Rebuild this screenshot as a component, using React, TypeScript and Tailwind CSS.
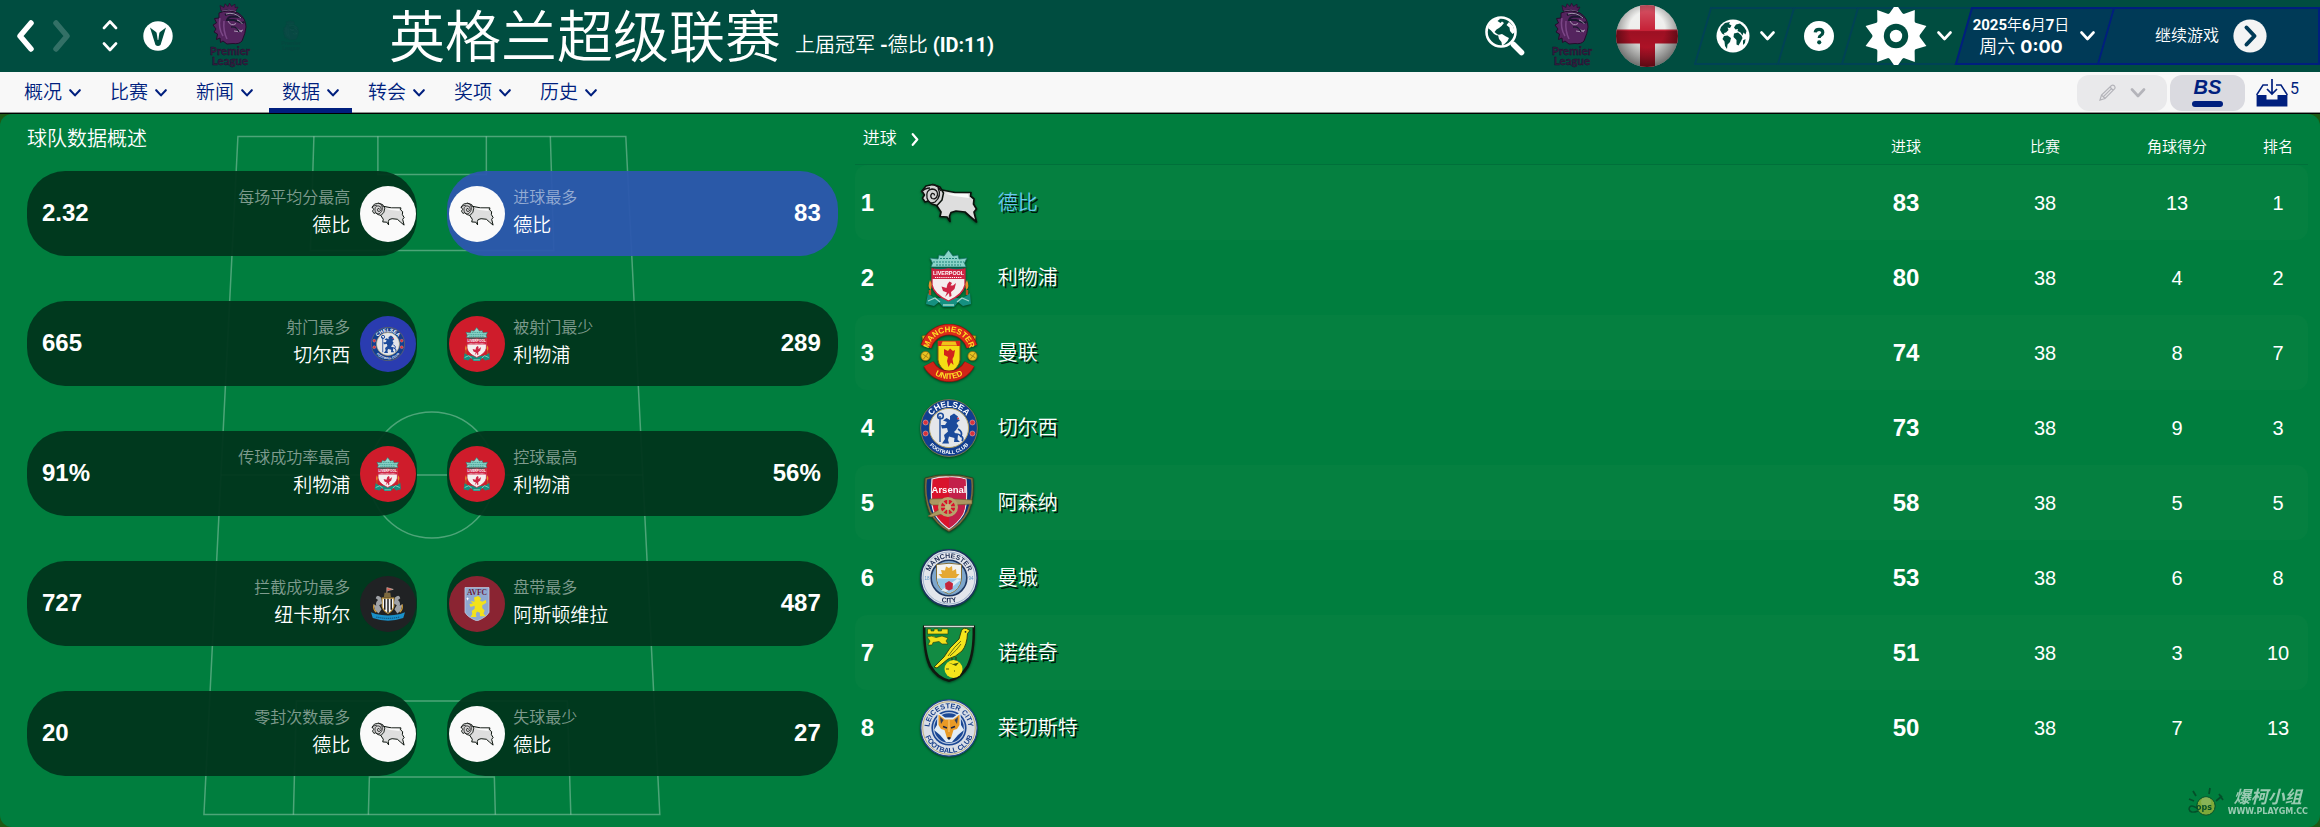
import React, { useId } from 'react';

type ClubKey =
  | 'derby' | 'liverpool' | 'manutd' | 'chelsea' | 'arsenal'
  | 'mancity' | 'norwich' | 'leicester' | 'newcastle' | 'villa';

const NAV_ITEMS = ['概况', '比赛', '新闻', '数据', '转会', '奖项', '历史'];

const STATS: { label: string; club: string; crest: ClubKey; value: string; badge: string }[] = [
  { label: '每场平均分最高', club: '德比', crest: 'derby', value: '2.32', badge: 'bg-[#fafafa]' },
  { label: '进球最多', club: '德比', crest: 'derby', value: '83', badge: 'bg-[#fafafa]' },
  { label: '射门最多', club: '切尔西', crest: 'chelsea', value: '665', badge: 'bg-[#2a3cb0]' },
  { label: '被射门最少', club: '利物浦', crest: 'liverpool', value: '289', badge: 'bg-[#cf1c2b]' },
  { label: '传球成功率最高', club: '利物浦', crest: 'liverpool', value: '91%', badge: 'bg-[#cf1c2b]' },
  { label: '控球最高', club: '利物浦', crest: 'liverpool', value: '56%', badge: 'bg-[#cf1c2b]' },
  { label: '拦截成功最多', club: '纽卡斯尔', crest: 'newcastle', value: '727', badge: 'bg-[#202224]' },
  { label: '盘带最多', club: '阿斯顿维拉', crest: 'villa', value: '487', badge: 'bg-[#8a2432]' },
  { label: '零封次数最多', club: '德比', crest: 'derby', value: '20', badge: 'bg-[#fafafa]' },
  { label: '失球最少', club: '德比', crest: 'derby', value: '27', badge: 'bg-[#fafafa]' },
];

const ROWS: { club: string; crest: ClubKey; goals: number; games: number; corners: number; rank: number }[] = [
  { club: '德比', crest: 'derby', goals: 83, games: 38, corners: 13, rank: 1 },
  { club: '利物浦', crest: 'liverpool', goals: 80, games: 38, corners: 4, rank: 2 },
  { club: '曼联', crest: 'manutd', goals: 74, games: 38, corners: 8, rank: 7 },
  { club: '切尔西', crest: 'chelsea', goals: 73, games: 38, corners: 9, rank: 3 },
  { club: '阿森纳', crest: 'arsenal', goals: 58, games: 38, corners: 5, rank: 5 },
  { club: '曼城', crest: 'mancity', goals: 53, games: 38, corners: 6, rank: 8 },
  { club: '诺维奇', crest: 'norwich', goals: 51, games: 38, corners: 3, rank: 10 },
  { club: '莱切斯特', crest: 'leicester', goals: 50, games: 38, corners: 7, rank: 13 },
];

/* ---------- icons ---------- */

const Chevron = ({ dir = 'down', className }: { dir?: 'down' | 'up' | 'left' | 'right'; className: string }) => {
  const d = {
    down: 'M1.5 1.5 7.5 8 13.5 1.5',
    up: 'M1.5 8 7.5 1.5 13.5 8',
    left: 'M15 3 4 16 15 29',
    right: 'M4 3 15 16 4 29',
  }[dir];
  const wide = dir === 'down' || dir === 'up';
  return (
    <svg viewBox={wide ? '0 0 15 10' : '0 0 19 32'} className={className} fill="none" stroke="currentColor"
      strokeWidth={wide ? 2.6 : 5.5} strokeLinecap="round" strokeLinejoin="round" aria-hidden="true">
      <path d={d} />
    </svg>
  );
};

const BadgeV = () => (
  <svg viewBox="0 0 30 30" className="size-[30px]" aria-hidden="true">
    <circle cx="15" cy="15" r="14.7" fill="#fff" />
    <path d="M7 6.5 12.5 24Q15 26 17.5 24L23 6.5 15 12.5Z" fill="#004d40" />
    <path d="M13.5 11 16.5 11 15.3 19H14.7Z" fill="#fff" />
  </svg>
);

const SearchWorldIcon = () => (
  <svg viewBox="0 0 40 40" className="size-10" aria-hidden="true">
    <circle cx="16" cy="16" r="14.5" fill="none" stroke="#fff" strokeWidth="2.6" />
    <path d="M28.5 28.5 36.5 36.5" stroke="#fff" strokeWidth="5.6" strokeLinecap="round" />
    <path d="M3 12 6 6 12 2.6 15 3 12.5 5 15.5 7 17 5.5 19 7 16.5 10 14 12 11.5 13.5 9.5 16 12 18 14 19 12 19.5 9 18 6 14.5Z" fill="#fff" />
    <path d="M13 19 17 18 21 20.5 24 22 22.5 25 19.5 28 17 30 16.5 26 14 23Z" fill="#fff" />
    <path d="M24 6 28 10 30 16 27.5 18 25 15 24.5 11.5 21.5 9Z" fill="#fff" />
  </svg>
);

const WorldIcon = () => (
  <svg viewBox="0 0 34 34" className="size-[34px]" aria-hidden="true">
    <circle cx="17" cy="17" r="16.5" fill="#fff" />
    <g fill="#004d40">
      <path d="M5 8 9 4 14 3 13 5 15.5 6.5 14 9 11.5 8.5 12.5 11 10 13.5 8 14 8.5 16 6 14.5 4 11Z" />
      <path d="M8 17 11.5 16.5 15 19 14 23 11.5 25.5 11 30 9 27 8.5 22.5 6.5 20Z" />
      <path d="M18 8.5 20 5.5 24 4.5 28 8 30.5 12 29.5 15.5 27.5 13.5 26.5 16.5 24.5 13.5 21.5 12 22 10 19.5 10.5Z" />
      <path d="M18 14.5 22 13.5 25.5 16.5 26.5 19 24.5 23 22.5 26.5 20.5 25.5 20.5 21 17.5 18Z" />
      <path d="M27 21.5 29.5 20 29 24 27 26Z" />
    </g>
  </svg>
);

const HelpIcon = () => (
  <svg viewBox="0 0 30 30" className="size-[30px]" aria-hidden="true">
    <circle cx="15" cy="15" r="15" fill="#fff" />
    <path d="M11.2 11.4Q11.6 8.4 15.1 8.4 18.8 8.4 18.8 11.5 18.8 13.4 16.8 14.4 15.2 15.2 15.2 17" fill="none" stroke="#004d40" strokeWidth="3.2" />
    <circle cx="15.2" cy="21.3" r="2.1" fill="#004d40" />
  </svg>
);

const gearPoints = Array.from({ length: 20 }, (_, i) => {
  const a = (Math.PI * i) / 10 - Math.PI / 2;
  const r = i % 2 === 0 ? 32 : 23;
  return `${(31 + r * Math.cos(a)).toFixed(2)},${(31 + r * Math.sin(a)).toFixed(2)}`;
}).join(' ');

const GearIcon = () => (
  <svg viewBox="0 0 62 62" className="size-[62px]" aria-hidden="true">
    <polygon points={gearPoints} fill="#fff" />
    <circle cx="31" cy="31" r="23.5" fill="#fff" />
    <circle cx="31" cy="31" r="12.2" fill="#004d40" />
    <circle cx="31" cy="31" r="6.2" fill="#fff" />
  </svg>
);

const ContinueIcon = () => (
  <svg viewBox="0 0 34 34" className="size-[34px]" aria-hidden="true">
    <circle cx="17" cy="17" r="16.6" fill="#f4f4f4" />
    <path d="M13.5 8.5 21.5 17 13.5 25.5" fill="none" stroke="#003a57" strokeWidth="4" strokeLinecap="round" strokeLinejoin="round" />
  </svg>
);

const PencilIcon = () => (
  <svg viewBox="0 0 17 17" className="size-[17px]" fill="none" stroke="#b4b4ba" strokeWidth="1.2" aria-hidden="true">
    <path d="M1 16 2.5 11 12.5 1.5Q14 .6 15.5 2 16.6 3.5 15.5 4.8L6 14.5ZM2.5 11 6 14.5M11 3 14 6.2M4.3 12.7 12.5 4.6" />
  </svg>
);

const InboxIcon = () => (
  <svg viewBox="0 0 32 28" className="h-7 w-8" aria-hidden="true">
    <path d="M.6 16 7 6H12M20 6h5L31.4 16" fill="none" stroke="#001f7e" strokeWidth="1.5" />
    <path d="M.6 16H10.5V20.5H21.5V16H31.4V27.5H.6Z" fill="#001f7e" />
    <path d="M16 0V14.5M11 10 16 15 21 10" fill="none" stroke="#001f7e" strokeWidth="1.7" />
  </svg>
);

const PremierLogo = ({ className }: { className: string }) => (
  <svg viewBox="0 0 42 66" className={className} role="img" aria-label="Premier League">
    <path d="M12 8 11 2.5 15 4.5 16 .8 19 3.6 20.5.2 22.5 3.4 26 1.2 26 4.6 29 4 26.5 8.5Q19 5.5 12 8Z" fill="#4d1f55" stroke="#2b0f33" strokeWidth=".8" />
    <path d="M13 8.2Q20 6 27 8.6" fill="none" stroke="#a57bb0" strokeWidth=".8" />
    <path d="M10 10Q19 6 29 10 37 15 37 24 36.5 30 33 38 30 41.5 24 40.5L18 41 14 38 11.5 39.5 11 35 7.5 36.5 8.5 31 5 29 7 26 4 22 7.5 20 5.5 15.5 10 15Z" fill="#54245e" stroke="#240c2c" strokeWidth="1" />
    <path d="M16 12Q25 8 31 14L24 13.5Q19 13.5 18 17L25 17 33 20 35.5 19" fill="none" stroke="#1b1830" strokeWidth="2" />
    <path d="M17 11Q25 8.5 32 15M19 18Q22 24 27 20.5M28 17Q31 17.5 33.5 21M25 28Q30 30 34 27M27 25 33 29" fill="none" stroke="#b6a3bd" strokeWidth=".9" />
    <path d="M11 15Q9 25 14 33M15 18Q14 28 18 36" fill="none" stroke="#7b4787" strokeWidth="1.5" />
    <path d="M22 24Q28 23 30 29" fill="none" stroke="#1b1830" strokeWidth="1.4" />
    <g fill="#371b45" stroke="#221029" strokeWidth=".4" fontFamily="Lato, sans-serif" fontWeight="700" fontSize="11.5" textAnchor="middle">
      <text x="21" y="52">Premier</text>
      <text x="21" y="62">League</text>
    </g>
  </svg>
);

const EnglandBall = () => {
  const id = useId();
  return (
    <svg viewBox="0 0 64 64" className="size-16" role="img" aria-label="England">
      <defs>
        <clipPath id={`${id}c`}><circle cx="32" cy="32" r="31" /></clipPath>
        <radialGradient id={`${id}g`} cx=".5" cy=".4" r=".62">
          <stop offset=".45" stopColor="#000" stopOpacity="0" />
          <stop offset="1" stopColor="#000" stopOpacity=".6" />
        </radialGradient>
        <linearGradient id={`${id}s`} x1="0" y1="0" x2="0" y2="1">
          <stop offset="0" stopColor="#fff" stopOpacity=".3" />
          <stop offset=".42" stopColor="#fff" stopOpacity=".05" />
          <stop offset=".43" stopColor="#000" stopOpacity=".2" />
          <stop offset="1" stopColor="#000" stopOpacity="0" />
        </linearGradient>
      </defs>
      <g clipPath={`url(#${id}c)`}>
        <path d="M0 0H64V64H0Z" fill="#ededeb" />
        <path d="M25 0H40V64H25ZM0 25.5H64V39.5H0Z" fill="#c3142b" />
        <path d="M0 0H64V64H0Z" fill={`url(#${id}s)`} />
        <path d="M0 0H64V64H0Z" fill={`url(#${id}g)`} />
      </g>
    </svg>
  );
};

/* ---------- club crests, all on a 58 unit square ---------- */

const Derby = () => (
  <g strokeLinejoin="round">
    <path d="M22 16 35 18.5 51 18.5 50.5 22 54 25 53.5 30 56.5 35 54 38 56.5 48 50 42.5 45 38 36 37 31 38.5 29.5 42 30 47.5 27 43 20 42.5 21 38 17 32 15 28Z" fill="#dedede" stroke="#0a120c" strokeWidth="1.7" />
    <path d="M25 19.5 48 20 49 24 34 22Z" fill="#fafafa" />
    <path d="M2 17 6 12 13 10.5 20 13 23.5 19 22 26 17 31.5 12 30 8 27 5 28 2.5 24 4.5 21Z" fill="#d4d4d4" stroke="#0a120c" strokeWidth="1.5" />
    <path d="M18 14Q22 22 15 28 9 31 7 24 5.5 16 12 15 18 15.5 17.5 21 16 26 12 24.5 9.5 22 12 19.5 14.5 19 14.5 21.5M1 18Q5 14 10 14M12 10.5Q18 11 21 17" fill="none" stroke="#161616" strokeWidth="1.3" />
  </g>
);

const Liverpool = () => (
  <g>
    <path d="M8 44Q13 50 20 49H37Q44 50 50 44L51 55 43 57 38 53 34 58H23L19 53 14 57 6 55Z" fill="#159080" />
    <path d="M8 52 15 49 20 53M49 52 42 49 37 53M23 56H34" fill="none" stroke="#a3d8ca" strokeWidth="1.3" />
    <path d="M14 19H43V22H14Z" fill="#0c6b5f" />
    <path d="M11 18 12.5 14 10 9 18 10 19 6 24 7 28.5 1 33 7 38 6 39 10 47 9 44.5 14 46 18Z" fill="#8ad3c8" stroke="#16786d" strokeWidth=".8" />
    <path d="M13 13H44M20 9.5H37M16 16H41" stroke="#1b8277" strokeWidth="1" strokeDasharray="2 1" />
    <path d="M12 20Q20 22 28.5 20 37 22 45 20V36Q43 46 28.5 52 14 46 12 36Z" fill="#f4eeee" stroke="#cc2440" strokeWidth="1.3" />
    <path d="M12 20Q20 22 28.5 20 37 22 45 20V30H12Z" fill="#cf2444" />
    <text x="28.5" y="26.3" fontSize="5.4" fontWeight="700" fill="#fff" textAnchor="middle" fontFamily="Liberation Sans, sans-serif">LIVERPOOL</text>
    <path d="M15 28.5H42" stroke="#fff" strokeWidth="1.2" strokeDasharray="1.2 .9" />
    <path d="M25 48 27 43.5 23 42 21.5 37.5 26.5 39 27.5 35 29.5 32.5 32 34 30.5 36.5 33 36.5 36 34 34.5 40 31 43 31.5 47 29.5 48 29 44Z" fill="#cf2444" />
    <path d="M10 31Q13 36 10.5 41 7 38 10 31ZM47 31Q44 36 46.5 41 50 38 47 31Z" fill="#e6902b" />
    <path d="M10 41V46M47 41V46" stroke="#b94e23" strokeWidth="2.4" />
  </g>
);

/** Text bent round the centre of a round crest, over its top or under its bottom. */
const ArcText = ({ text, r, size, fill, bottom = false }: { text: string; r: number; size: number; fill: string; bottom?: boolean }) => {
  const id = useId();
  const d = bottom
    ? `M${29 - r} 29A${r} ${r} 0 0 0 ${29 + r} 29`
    : `M${29 - r} 29A${r} ${r} 0 0 1 ${29 + r} 29`;
  return (
    <>
      <defs><path id={id} d={d} /></defs>
      <text fontFamily="Liberation Sans, sans-serif" fontWeight="700" fontSize={size} fill={fill} textAnchor="middle">
        <textPath href={`#${id}`} startOffset="50%">{text}</textPath>
      </text>
    </>
  );
};

const ManUtd = () => (
  <g>
    <path d="M19 4 29 1.5 39 4M19 54 29 57 39 54" fill="none" stroke="#d9a520" strokeWidth="3" strokeDasharray="2.5 1.2" />
    <path d="M2 12 7 11 8 16 3 18ZM56 12 51 11 50 16 55 18Z" fill="#d0b820" stroke="#6a5a10" strokeWidth=".6" />
    <path d="M18 17H40V36Q39 44 29 49 19 44 18 36Z" fill="#f5dd14" stroke="#7e5d10" strokeWidth="1" />
    <path d="M18 17H40V22H18Z" fill="#d9251c" />
    <path d="M21 21.5 22.5 17.5H35.5L37 21.5Z" fill="#f0c419" />
    <path d="M24 25 28 27 30 24.5 33 27 35 26 34 32 32.5 35 33.5 41 31 38.5 28.5 43 27 37 28 33 24 31Z" fill="#d2231c" />
    <path d="M6.2 22.5A23.8 23.8 0 0 1 51.8 22.5" fill="none" stroke="#8a1510" strokeWidth="11.5" />
    <path d="M6.2 22.5A23.8 23.8 0 0 1 51.8 22.5" fill="none" stroke="#dc2a1a" strokeWidth="10" />
    <path d="M8.5 40A23.2 23.2 0 0 0 49.5 40" fill="none" stroke="#8a1510" strokeWidth="11.5" />
    <path d="M8.5 40A23.2 23.2 0 0 0 49.5 40" fill="none" stroke="#d02418" strokeWidth="10" />
    <ArcText text="MANCHESTER" r={21} size={8} fill="#ffe226" />
    <ArcText text="UNITED" r={26} size={8} fill="#ffe226" bottom />
    <circle cx="5.5" cy="32" r="4.6" fill="#e8c322" stroke="#8c6b10" strokeWidth=".8" />
    <circle cx="52.5" cy="32" r="4.6" fill="#e8c322" stroke="#8c6b10" strokeWidth=".8" />
    <path d="M2.5 30 8.5 34M8 29 3.5 35M49.5 30 55.5 34M55 29 50.5 35" stroke="#9b7712" strokeWidth=".8" />
  </g>
);

const Chelsea = () => (
  <g>
    <circle cx="29" cy="29" r="28.4" fill="#123e8f" stroke="#7c7554" strokeWidth="1" />
    <circle cx="29" cy="29" r="19.6" fill="#e4e6ea" stroke="#b6a567" strokeWidth="1" />
    <ArcText text="CHELSEA" r={21} size={8.4} fill="#fff" />
    <ArcText text="FOOTBALL CLUB" r={26} size={5.2} fill="#fff" bottom />
    <g fill="#d8323c" stroke="#f2c9b8" strokeWidth=".5">
      <circle cx="5.6" cy="23.5" r="2.5" /><circle cx="5.6" cy="34.5" r="2.5" />
      <circle cx="52.4" cy="23.5" r="2.5" /><circle cx="52.4" cy="34.5" r="2.5" />
    </g>
    <path d="M30 17 34 14.5 38 17.5 37 20 40 21 36.5 24 38.5 27 36 31 34 33 38 36 37.5 40.5 40 43 34 43 34.5 39 29 37.5 28 41 29 44.5 22 44.5 25 40 24 36 28 32.5 27 29 22 29.5 21 26 25 26 27 23 23 21.5 26.5 19 30 21Z" fill="#1b4a9b" />
    <path d="M20 17V43" stroke="#1b4a9b" strokeWidth="1.4" />
    <circle cx="20.5" cy="17" r="2.8" fill="none" stroke="#1b4a9b" strokeWidth="1.6" />
    <path d="M38 30Q43 33 41 37 44 39 42 42M36 35Q40 35 41 38" fill="none" stroke="#1b4a9b" strokeWidth="1.7" />
    <circle cx="38" cy="19.5" r="1" fill="#d8323c" />
  </g>
);

const Arsenal = () => (
  <g>
    <path d="M5 4Q17 0 29 1 41 0 53 4 55 22 49 38 42 51 29 58 16 51 9 38 3 22 5 4Z" fill="#7c6b3c" stroke="#2c3a20" strokeWidth=".8" />
    <path d="M7 5.5Q18 2 29 3 40 2 51 5.5 53 22 47 37 41 49 29 55.5 17 49 11 37 5 22 7 5.5Z" fill="#0b3479" />
    <path d="M12 5Q20 2.5 29 3 38 2.5 46 5 48 30 43.5 40 38 49 29 55 20 49 14.5 40 10 30 12 5Z" fill="#d9132c" stroke="#efe3e3" strokeWidth="1.2" />
    <path d="M29 3.6Q38 3 45.4 5.4 47.2 30 43 39.6 38 48.5 29 54.2Z" fill="#c3204a" />
    <text x="29" y="18.5" fontSize="9.5" fontWeight="700" fill="#fff" textAnchor="middle" fontFamily="Liberation Sans, sans-serif">Arsenal</text>
    <path d="M10 25 27 24.5 52 26V30L34 31 12 31Q8 29 10 25ZM22 34 8 42 11 43 26 39Z" fill="#ab9760" stroke="#6c5a2c" strokeWidth=".6" />
    <circle cx="28" cy="33" r="8.6" fill="#d9132c" stroke="#b7a36b" strokeWidth="2.8" />
    <path d="M28 25V41M20 33H36M22.3 27.3 33.7 38.7M33.7 27.3 22.3 38.7" stroke="#b7a36b" strokeWidth="1.7" />
    <circle cx="28" cy="33" r="3" fill="#c9b780" />
  </g>
);

const ManCity = () => (
  <g>
    <circle cx="29" cy="29" r="28.2" fill="#e3e6ec" stroke="#1c3660" strokeWidth="1.6" />
    <circle cx="29" cy="29" r="26" fill="none" stroke="#8ea6c4" strokeWidth=".8" />
    <circle cx="29" cy="29" r="17.8" fill="#7ea6cb" stroke="#1c3660" strokeWidth="1.6" />
    <ArcText text="MANCHESTER" r={20} size={7} fill="#1b2c52" />
    <ArcText text="CITY" r={24.8} size={7} fill="#1b2c52" bottom />
    <text x="7" y="31" fontSize="4.5" fill="#5c95c9" textAnchor="middle" fontFamily="Liberation Sans, sans-serif">18</text>
    <text x="51" y="31" fontSize="4.5" fill="#5c95c9" textAnchor="middle" fontFamily="Liberation Sans, sans-serif">94</text>
    <path d="M16.5 15.5Q29 13 41.5 15.5V30Q40 41 29 45 18 41 16.5 30Z" fill="#f2f2f0" stroke="#836f3a" strokeWidth="1" />
    <path d="M17 29.5H41Q40 40.5 29 44.5 18 40.5 17 29.5Z" fill="#94c6e8" />
    <path d="M21 41.5 37 30 40.5 31 26 43Z" fill="#dfecf5" />
    <path d="M18.5 25 22 25 21 21 25 21.5 26 17.5 29 19 32 17 32.5 22 36 20 36.5 25H39.5L36 29H22Z" fill="#e5a832" />
    <path d="M29 32 33 34.5 32.5 40 29 41.5 25.5 40 25 34.5Z" fill="#c4253b" />
  </g>
);

const Norwich = () => (
  <g>
    <path d="M3 1.5H55Q55.5 29 49 43 42 55 29 58 16 55 9 43 2.5 29 3 1.5Z" fill="#101810" />
    <path d="M5.5 3.5H52.5Q53 29 46.5 41.5 40 52.5 29 55.5 18 52.5 11.5 41.5 5 29 5.5 3.5Z" fill="#128b43" />
    <path d="M4 2.5H54" stroke="#d5ddd6" strokeWidth="1.4" />
    <path d="M7.5 10V5H11V7H14V5H18V7H21.5V5H25.5L28 5V10ZM7 13Q12 11 16 13.5L22 12 28 14 26 17 28 20H22L19 17.5 13 18.5 12 21H8L10 17Z" fill="#f0e01c" stroke="#2c3a0c" strokeWidth=".6" />
    <path d="M50 6.5 46.5 4.5Q42 3.5 41 8L39 15 30 24 24 33 14 43 17 44 28 35Q36 33 42 27 47 21 47.5 9.5Z" fill="#f5e51c" stroke="#2c3a0c" strokeWidth=".9" />
    <path d="M41 17Q35 22 28 32M41 20Q37 26 30 32" fill="none" stroke="#4b5210" strokeWidth=".8" />
    <circle cx="45.5" cy="7.8" r=".9" fill="#222" />
    <path d="M32 34V38M36 33V38" stroke="#2c3a0c" strokeWidth="1.1" />
    <circle cx="33.5" cy="45" r="9" fill="#f5e51c" />
    <path d="M28 38.5 33 40 39 38.5 36 42Z" fill="#44560f" />
    <path d="M26 45H29M34 47H35" stroke="#44560f" strokeWidth="1" />
  </g>
);

const Leicester = () => (
  <g>
    <circle cx="29" cy="29" r="28.2" fill="#d9dee6" stroke="#1f4487" strokeWidth="1.2" />
    <circle cx="29" cy="29" r="26.3" fill="none" stroke="#b49a4e" strokeWidth=".7" />
    <circle cx="29" cy="29" r="17.6" fill="#1a4794" />
    <circle cx="29" cy="29" r="15.4" fill="none" stroke="#b8c8e0" strokeWidth="1.2" />
    <ArcText text="LEICESTER CITY" r={19.6} size={7.2} fill="#173f8a" />
    <ArcText text="FOOTBALL CLUB" r={25} size={7.2} fill="#173f8a" bottom />
    <path d="M17.5 13 25 18.5H33L40.5 13 41 26 44 31 38 36 32 43H26L20 36 14 31 17 26Z" fill="#e3edf6" />
    <path d="M18.5 15.5 25 20.5H33L39.5 15.5 39.5 26 37 30 33.5 31 31 39H27L24.5 31 21 30 18.5 26Z" fill="#e99a26" />
    <path d="M20 18 23.5 21 21 25ZM38 18 34.5 21 37 25Z" fill="#343c55" />
    <path d="M23 27.5 27 29M35 27.5 31 29" stroke="#1d2440" strokeWidth="1.5" />
    <path d="M27 39Q29 37 31 39L29 41Z" fill="#16203c" />
    <path d="M29 21V33" stroke="#f7c36d" strokeWidth="1.3" />
  </g>
);

const Newcastle = () => (
  <g>
    <path d="M27 14V1L38 4 28 6.5" fill="#d95a4e" stroke="#c9c3b8" strokeWidth="1" />
    <path d="M23 10H33L34 17H22Z" fill="#7d6a3f" />
    <path d="M19 19H39V33Q37 41 29 45 21 41 19 33Z" fill="#f4f4f4" stroke="#c69a3d" strokeWidth="1.8" />
    <path d="M23.5 20V39M29 20V44M34.5 20V39" stroke="#111" strokeWidth="2.4" />
    <path d="M17 18Q10 11 8 19L12 22Q7 26 9 32L4 29 7 40 13 45 18 38 14 31 19 28ZM41 18Q48 11 50 19L46 22Q51 26 49 32L54 29 51 40 45 45 40 38 44 31 39 28Z" fill="#9fa2a6" />
    <path d="M5 30Q3 38 9 43M53 30Q55 38 49 43" fill="none" stroke="#d59c31" strokeWidth="2" />
    <path d="M0 43 8 46Q29 51 50 46L58 43 55 53Q29 62 3 53Z" fill="#1a90c9" />
    <path d="M9 51Q29 56 49 51" fill="none" stroke="#0c4e77" strokeWidth="1.8" strokeDasharray="2 1.4" />
  </g>
);

const Villa = () => (
  <g>
    <path d="M8.5 1H49.5V43Q46 51 29 58 12 51 8.5 43Z" fill="#8fa9d0" stroke="#c9d3e4" strokeWidth="1.2" />
    <text x="29" y="13.5" fontSize="13" fontWeight="700" fill="#6a1c3a" textAnchor="middle" fontFamily="Liberation Serif, serif">AVFC</text>
    <path d="M24 18 31 15.5 36 19 34 23 38 25 44 22 45 27 38 31 38 36 42 40 40 45 44 50 34 50 34 44 29 42 27 46 28 51 18 51 21 46 20 41 25 37 25 32 18 34 16 29 22 28 18 24 25 25Z" fill="#f3e21b" />
    <path d="M13 17 14 19.5 16.5 20 14 21 13 23.5 12 21 10 20 12 19.5Z" fill="#fff" />
  </g>
);

const CRESTS: Record<ClubKey, () => React.JSX.Element> = {
  derby: Derby, liverpool: Liverpool, manutd: ManUtd, chelsea: Chelsea, arsenal: Arsenal,
  mancity: ManCity, norwich: Norwich, leicester: Leicester, newcastle: Newcastle, villa: Villa,
};

const Crest = ({ club, className }: { club: ClubKey; className: string }) => {
  const Art = CRESTS[club];
  return (
    <svg viewBox="0 0 58 58" className={className} aria-hidden="true">
      <Art />
    </svg>
  );
};

/* ---------- header ---------- */

const Slant = ({ className, children, label }: { className: string; children: React.ReactNode; label?: string }) => (
  <button type="button" aria-label={label} className={`relative flex h-[58px] items-center ${className}`}>
    {children}
  </button>
);

const slantFaint = 'absolute inset-0 -skew-x-[16deg] border-2 border-r-0 border-[#004255]';
const slantBlue = 'absolute inset-0 -skew-x-[16deg] border-2 border-r-0 border-[#001f7e] bg-[#003a57]';

const Header = () => (
  <header className="flex h-[72px] items-center bg-[#004d40] text-white">
    <button type="button" aria-label="后退" className="ml-4"><Chevron dir="left" className="h-8 w-[19px]" /></button>
    <button type="button" aria-label="前进" disabled className="ml-[17px] text-white/20"><Chevron dir="right" className="h-8 w-[19px]" /></button>
    <button type="button" aria-label="切换" className="ml-[31px] flex flex-col gap-3">
      <Chevron dir="up" className="h-[10px] w-4" />
      <Chevron dir="down" className="h-[10px] w-4" />
    </button>
    <button type="button" aria-label="收藏" className="ml-[25px]"><BadgeV /></button>
    <PremierLogo className="ml-9 h-[66px] w-[42px]" />
    <PremierLogo className="ml-7 h-8 w-6 opacity-10" />
    <h1 className="ml-[86px] pt-1 text-[56px] leading-[68px] whitespace-nowrap">英格兰超级联赛</h1>
    <p className="mb-3 ml-[14px] self-end font-['Roboto','Noto_Sans_CJK_SC',sans-serif] text-[20px] leading-[30px] whitespace-nowrap">
      上届冠军 <b>-</b>德比 <b>(ID:11)</b>
    </p>

    <div className="ml-auto flex items-center">
      <button type="button" aria-label="搜索"><SearchWorldIcon /></button>
      <PremierLogo className="ml-[26px] h-[66px] w-[42px]" />
      <span className="ml-[22px]"><EnglandBall /></span>
      <div className="ml-[15px] flex overflow-hidden border-r-2 border-[#001f7e] pl-2">
        <Slant label="世界" className="w-[83px] gap-[10px] pl-[14px]">
          <span className={slantFaint} />
          <span className="relative"><WorldIcon /></span>
          <Chevron className="relative h-[10px] w-[15px]" />
        </Slant>
        <Slant label="帮助" className="w-16 justify-center pl-1">
          <span className={slantFaint} />
          <span className="relative"><HelpIcon /></span>
        </Slant>
        <Slant label="设置" className="w-[114px] gap-[10px] pl-4">
          <span className={slantFaint} />
          <span className="relative"><GearIcon /></span>
          <Chevron className="relative h-[10px] w-[15px]" />
        </Slant>
        <Slant className="w-[142px] gap-[10px] pl-[9px]">
          <span className={slantBlue} />
          <span className="relative w-[98px] shrink-0 text-center leading-[22px] whitespace-nowrap">
            <span className="block font-['Roboto','Noto_Sans_CJK_SC',sans-serif] text-[15px]">
              <b>2025</b>年<b>6</b>月<b>7</b>日
            </span>
            <span className="block text-[18px]">
              周六 <b className="font-['Inter',sans-serif]">0:00</b>
            </span>
          </span>
          <Chevron className="relative h-[10px] w-[15px]" />
        </Slant>
        <Slant className="w-[213px] gap-[14px] pl-[50px]">
          <span className="absolute inset-y-0 -right-4 left-0 -skew-x-[16deg] border-2 border-[#001f7e] bg-[#003a57]" />
          <span className="relative text-[16px] leading-6 whitespace-nowrap">继续游戏</span>
          <span className="relative"><ContinueIcon /></span>
        </Slant>
      </div>
    </div>
  </header>
);

const NavBar = () => (
  <nav className="flex h-[42px] items-stretch border-b border-black bg-[#f8f8f8] pl-[11px] text-[#001f7e] shadow-[inset_0_-1px_0_#8d928d]">
    <div className="flex gap-[3px]">
      {NAV_ITEMS.map((item) => (
        <a
          key={item}
          href="#"
          aria-current={item === '数据' ? 'page' : undefined}
          className={`flex w-[83px] items-center justify-center gap-[7px] border-b-[5px] pt-[6px] text-[19px] leading-6 ${
            item === '数据' ? 'border-[#001f7e]' : 'border-transparent'
          }`}
        >
          {item}
          <Chevron className="h-2 w-3" />
        </a>
      ))}
    </div>
    <div className="ml-auto flex items-center gap-[3px] pr-[21px]">
      <button type="button" aria-label="编辑" disabled className="flex h-9 w-[90px] items-center justify-center gap-[14px] rounded-xl bg-[#e9e9eb] text-[#b4b4ba]">
        <PencilIcon />
        <Chevron className="h-[10px] w-4" />
      </button>
      <button type="button" className="flex h-9 w-[75px] flex-col items-center gap-[5px] rounded-xl bg-[#dadae0] pt-1">
        <span className="text-[20px] leading-[17px] font-black italic">BS</span>
        <span className="h-[6px] w-[31px] rounded-full bg-[#001f7e]" />
      </button>
      <button type="button" aria-label="收件箱 5" className="ml-2 flex items-start gap-[2px]">
        <InboxIcon />
        <span className="font-['Roboto',sans-serif] text-[16px] leading-5 font-normal">5</span>
      </button>
    </div>
  </nav>
);

/* ---------- content ---------- */

const Pitch = () => (
  <svg
    viewBox="0 0 855 713"
    preserveAspectRatio="none"
    className="absolute inset-0 size-full"
    fill="none"
    stroke="#fff"
    strokeOpacity=".3"
    strokeWidth="1.5"
    aria-hidden="true"
  >
    <path d="M238 22.5H626L660 700.5H204Z" />
    <path d="M314 22.5 310.5 136.5H554L550.5 22.5M378 22.5V60.5H486.5V22.5" />
    <path d="M221 361H643" />
    <circle cx="432" cy="361" r="63" />
    <path d="M293.5 700.5 296.5 587H567.5L571 700.5M368.5 700.5 369.5 663H494.5L495.5 700.5" />
  </svg>
);

const StatTile = ({ stat, side, active }: { stat: (typeof STATS)[number]; side: 'left' | 'right'; active: boolean }) => (
  <button
    type="button"
    aria-pressed={active}
    className={`flex h-[85px] items-center justify-between rounded-[38px] text-white ${
      side === 'left' ? 'pr-px pl-[15px] text-right' : 'flex-row-reverse pr-[17px] pl-[2px] text-left'
    } ${active ? 'bg-[#2c57ae]/95' : 'bg-[#00361c]/95'}`}
  >
    <span className="pb-[2px] text-[24px] leading-7 font-bold">{stat.value}</span>
    <span className={`flex items-center ${side === 'right' ? 'flex-row-reverse gap-2' : 'gap-[10px]'}`}>
      <span className="flex flex-col pb-1">
        <span className="text-[16px] leading-7 text-white/50">{stat.label}</span>
        <span className="text-[19px] leading-7">{stat.club}</span>
      </span>
      <span className={`flex size-14 items-center justify-center rounded-full ${stat.badge}`}>
        <Crest club={stat.crest} className="size-[34px]" />
      </span>
    </span>
  </button>
);

const Overview = () => (
  <section className="relative">
    <Pitch />
    <div className="relative pr-[17px] pl-[27px]">
      <h2 className="py-[10px] text-[20px] leading-[30px] font-[350] text-white">球队数据概述</h2>
      <div className="mt-[7px] grid grid-cols-2 gap-x-[30px] gap-y-[45px]">
        {STATS.map((stat, i) => (
          <StatTile key={stat.label} stat={stat} side={i % 2 === 0 ? 'left' : 'right'} active={i === 1} />
        ))}
      </div>
    </div>
  </section>
);

const Ranking = () => (
  <section className="flex flex-col pr-3 text-white">
    <table className="w-full table-fixed border-separate border-spacing-0">
      <colgroup>
        <col className="w-[65px]" />
        <col className="w-[78px]" />
        <col />
        <col className="w-[156px]" />
        <col className="w-[122px]" />
        <col className="w-[142px]" />
        <col className="w-[60px]" />
      </colgroup>
      <thead>
        <tr className="text-[15px] leading-5 [&>th]:h-[51px] [&>th]:border-b [&>th]:border-[#00703a] [&>th]:font-[350]">
          <th scope="col" colSpan={3} className="pl-2 text-left align-middle">
            <button type="button" className="flex items-center gap-[14px] text-[17px] leading-6">
              进球
              <Chevron dir="right" className="h-[13px] w-2" />
            </button>
          </th>
          <th scope="col" className="pb-[7px] align-bottom">进球</th>
          <th scope="col" className="pb-[7px] align-bottom">比赛</th>
          <th scope="col" className="pb-[7px] align-bottom">角球得分</th>
          <th scope="col" className="pb-[7px] align-bottom">排名</th>
        </tr>
      </thead>
      <tbody>
        {ROWS.map((row, i) => (
          <tr key={row.club} className="text-center text-[20px] leading-7 [&:nth-child(odd)>td]:bg-[#058040]">
            <td className="h-[75px] rounded-l-xl pl-[6px] text-left text-[24px] font-bold">{i + 1}</td>
            <td><Crest club={row.crest} className="size-[58px] drop-shadow-[0_1px_1px_rgba(0,0,0,0.5)]" /></td>
            <td className="text-left [text-shadow:2px_2px_0_#001a0c]">
              <a href="#" className={i === 0 ? 'text-[#6cc8f2]' : ''}>{row.club}</a>
            </td>
            <td className="text-[24px] font-bold">{row.goals}</td>
            <td>{row.games}</td>
            <td>{row.corners}</td>
            <td className="rounded-r-xl">{row.rank}</td>
          </tr>
        ))}
      </tbody>
    </table>
    <Watermark />
  </section>
);

const Watermark = () => (
  <div className="mt-auto flex items-center justify-end gap-1 pb-2 opacity-60">
    <svg viewBox="0 0 36 32" className="h-8 w-9" aria-hidden="true">
      <path d="M5 4 8 9M1 12 6 14M22 1 21 7M28 14 34 9M31 7 35 13" stroke="#06311c" strokeWidth="1.8" />
      <path d="M10 22Q2 16 1 22 2 27 10 24" fill="none" stroke="#06311c" strokeWidth="1.5" />
      <circle cx="18" cy="19" r="9.2" fill="#d3c636" stroke="#06311c" strokeWidth="1" />
      <circle cx="18" cy="15" r="5" fill="#f0e99a" opacity=".5" />
      <text x="16" y="23" fontSize="8" fontWeight="700" fill="#06311c" textAnchor="middle" fontFamily="DejaVu Sans, sans-serif">ops</text>
    </svg>
    <p className="flex flex-col items-center text-white">
      <span className="text-[17px] leading-[17px] font-bold italic">爆柯小组</span>
      <span className="font-['DejaVu_Sans',sans-serif] text-[8px] leading-3 font-bold">WWW.PLAYGM.CC</span>
    </p>
  </div>
);

export default function App() {
  return (
    <div className="flex min-h-screen flex-col bg-[#1d5a14] font-['Liberation_Sans','Noto_Sans_CJK_SC',sans-serif] font-[350]">
      <Header />
      <NavBar />
      <main className="grid flex-1 grid-cols-[minmax(0,7fr)_minmax(0,12fr)] overflow-hidden rounded-xl bg-[#007e3e]">
        <Overview />
        <Ranking />
      </main>
    </div>
  );
}
